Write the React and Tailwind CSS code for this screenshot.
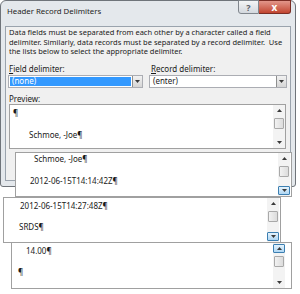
import React from "react";

const UI = { fontFamily: '"Noto Sans", "Open Sans", sans-serif' };

function Tri({ dir }) {
  return (
    <svg width="5" height="3" viewBox="0 0 5 3">
      <path d={dir === "up" ? "M0 3L2.5 0L5 3Z" : "M0 0L5 0L2.5 3Z"} fill="#3a3a3a" />
    </svg>
  );
}

function SBtn({ dir, hot }) {
  return (
    <div
      className={`h-[9px] w-full flex items-center justify-center rounded-[1px] ${
        hot ? "bg-linear-to-b from-[#e6f3fc] to-[#aed6f3] border border-[#3c7fb1]" : ""
      }`}
    >
      <Tri dir={dir} />
    </div>
  );
}

function Scrollbar({ upHot, downHot, className = "" }) {
  return (
    <div className={`w-[12px] flex flex-col bg-[#f3f3f3] py-[1px] ${className}`}>
      <SBtn dir="up" hot={upHot} />
      <div className="mt-[3px] h-[11px] mx-[1px] rounded-[1px] border border-[#a9a9a9] bg-linear-to-r from-[#f2f2f2] to-[#dcdcdc]" />
      <div className="flex-1" />
      <SBtn dir="down" hot={downHot} />
    </div>
  );
}

function Lines({ lines, pt, gap }) {
  return (
    <div className={`flex-1 flex flex-col text-[8px] leading-[11px] text-[#1a1a1a] whitespace-nowrap ${pt} ${gap}`} style={UI}>
      {lines.map((l, i) => (
        <div key={i} className={l.cls}>
          {l.t}
        </div>
      ))}
    </div>
  );
}

function Combo({ children, sel, w }) {
  return (
    <div className={`h-[13px] ${w} flex border border-[#abadb3] bg-white`}>
      <div className="flex-1 p-[1px] flex">
        <div
          className={`flex-1 flex items-center pl-[2px] text-[8px] leading-none ${
            sel ? "bg-[#3399ff] text-white" : "text-[#1a1a1a]"
          }`}
        >
          {children}
        </div>
      </div>
      <div className="w-[10px] flex items-center justify-center border-l border-[#8e8f8f] bg-linear-to-b from-[#f2f2f2] to-[#d5d5d5]">
        <Tri dir="down" />
      </div>
    </div>
  );
}

export default function App() {
  return (
    <div className="relative w-[300px] h-[294px] bg-white overflow-hidden" style={UI}>
      {/* dialog */}
      <div className="w-[296px] h-[187px] flex flex-col border border-[#6f747a] rounded-t-[6px] rounded-b-[3px] bg-[#e4e8ec]">
        <div className="h-[25px] flex items-start relative">
          <div className="pl-[6px] pt-[5px] text-[7.8px] leading-[11px] text-[#1e1e1e]">Header Record Delimiters</div>
          <div className="absolute right-[4px] top-[-1px] flex">
            <div className="w-[21px] h-[14px] border border-[#80868d] rounded-bl-[3px] bg-linear-to-b from-[#f4f5f6] to-[#d3d8de] flex items-center justify-center text-[9px] font-bold text-[#5a6068] leading-none">
              ?
            </div>
            <div className="w-[32px] h-[14px] border border-l-0 border-[#7b2d24] rounded-br-[3px] bg-linear-to-b from-[#e2968a] to-[#c1442f] flex items-center justify-center text-[10px] font-bold text-white leading-none">
              x
            </div>
          </div>
        </div>
        <div className="mx-[4px] h-[155px] border border-[#9aa3ad] bg-[#f0f0f0] flex flex-col pl-[3px]">
          <div className="pt-[1px] text-[7.5px] leading-[9.6px] text-[#1a1a1a] whitespace-nowrap">
            <div>Data fields must be separated from each other by a character called a field</div>
            <div>delimiter. Similarly, data records must be separated by a record delimiter.&nbsp; Use</div>
            <div>the lists below to select the appropriate delimiter.</div>
          </div>
          <div className="mt-[6px] flex">
            <div className="w-[141px] flex flex-col">
              <div className="text-[8px] leading-[11px] text-[#1a1a1a]">
                <span className="underline">F</span>ield delimiter:
              </div>
              <div className="mt-[1px] -ml-[1px]">
                <Combo sel w="w-[135px]">(none)</Combo>
              </div>
            </div>
            <div className="flex flex-col">
              <div className="text-[8px] leading-[11px] text-[#1a1a1a] pl-[1px]">
                <span className="underline">R</span>ecord delimiter:
              </div>
              <div className="mt-[1px] -ml-[1px]">
                <Combo w="w-[138px]">(enter)</Combo>
              </div>
            </div>
          </div>
          <div className="mt-[5px] text-[8px] leading-[11px] text-[#1a1a1a]">Preview:</div>
          <div className="w-[277px] h-[45px] border border-[#a0a0a0] bg-white flex">
            <Lines
              pt="pt-[2px]"
              gap="gap-[11px]"
              lines={[
                { t: "¶", cls: "pl-[3px]" },
                { t: "Schmoe, -Joe¶", cls: "pl-[19px]" },
              ]}
            />
            <Scrollbar />
          </div>
        </div>
      </div>

      {/* pane 2 */}
      <div className="absolute left-[15px] top-[152px] w-[277px] h-[45px] border border-[#a0a0a0] bg-white flex">
        <Lines
          pt="pt-[0px]"
          gap="gap-[11px]"
          lines={[
            { t: "Schmoe, -Joe¶", cls: "pl-[18px]" },
            { t: "2012-06-15T14:14:42Z¶", cls: "pl-[14px]" },
          ]}
        />
        <Scrollbar downHot className="mr-[1px]" />
      </div>

      {/* pane 3 */}
      <div className="absolute left-[3px] top-[197px] w-[278px] h-[46px] border border-[#a0a0a0] bg-white flex">
        <Lines
          pt="pt-[2px]"
          gap="gap-[10px]"
          lines={[
            { t: "2012-06-15T14:27:48Z¶", cls: "pl-[16px]" },
            { t: "SRDS¶", cls: "pl-[15px]" },
          ]}
        />
        <Scrollbar downHot className="mr-[1px]" />
      </div>

      {/* pane 4 */}
      <div className="absolute left-[11px] top-[242px] w-[281px] h-[47px] border border-[#a0a0a0] bg-white flex">
        <Lines
          pt="pt-[2px]"
          gap="gap-[10px]"
          lines={[
            { t: "14.00¶", cls: "pl-[14px]" },
            { t: "¶", cls: "pl-[6px]" },
          ]}
        />
        <Scrollbar upHot className="mr-[6px]" />
      </div>
    </div>
  );
}
